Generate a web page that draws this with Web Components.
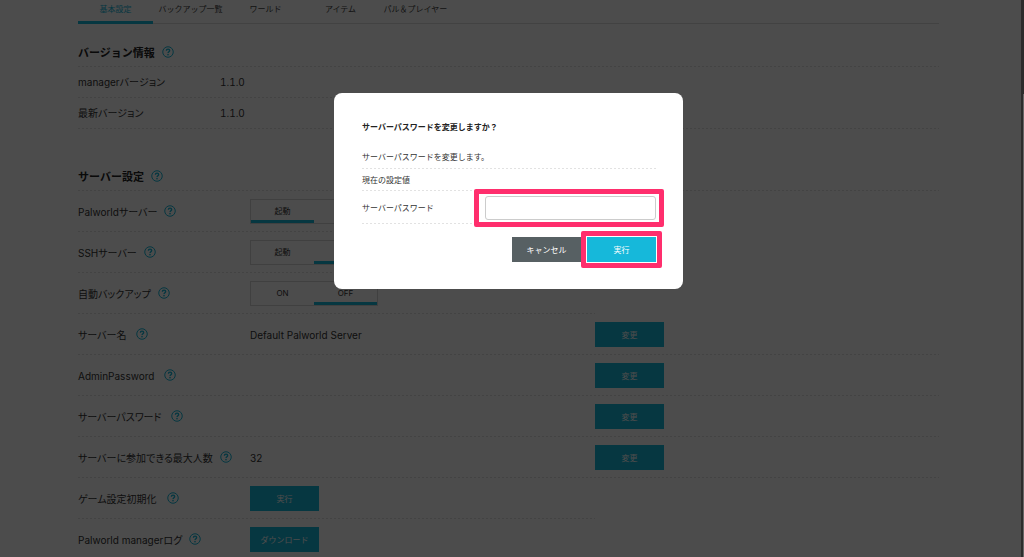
<!DOCTYPE html>
<html lang="ja">
<head>
<meta charset="utf-8">
<meta name="viewport" content="width=device-width, initial-scale=1">
<title>Palworld manager</title>
<style>
html, body { margin: 0; height: 100%; }
body {
  overflow: hidden;
  background: #fff;
  color: #333;
  font: 10px/16px Inter, "Noto Sans CJK JP", sans-serif;
  font-feature-settings: "palt";
  --accent: #16b8da;
  --dots: repeating-linear-gradient(90deg, #e2e2e2 0 2px, transparent 2px 4px);
}
</style>
</head>
<body>
<manager-page></manager-page>

<script>
function define(name, html, setup) {
  const template = document.createElement('template');
  template.innerHTML = html;
  customElements.define(name, class extends HTMLElement {
    constructor() {
      super();
      this.attachShadow({ mode: 'open' }).append(template.content.cloneNode(true));
    }
    connectedCallback() { if (setup) setup(this, this.shadowRoot); }
  });
}

define('help-button', `
<style>
:host { display: block; height: 14px; }
button { display: block; width: 12px; height: 12px; padding: 0; border: 0; background: none; color: var(--accent); }
svg { display: block; width: 12px; height: 12px; }
</style>
<button type="button" aria-label="ヘルプ">
<svg viewBox="0 0 24 24" fill="none" stroke="currentColor" stroke-width="2">
<circle cx="12" cy="12" r="10.5"/>
<path d="M8.800 9.400c0-2 1.400-3.200 3.300-3.200s3.200 1.100 3.200 2.800c0 2.400-3.200 2.500-3.200 5.200" stroke-width="2.800"/>
<circle cx="12" cy="17.300" r="1.600" fill="currentColor" stroke="none"/>
</svg></button>`);

define('action-button', `
<style>
:host { display: block; width: 69px; }
button { display: block; width: 100%; height: 25px; padding: 0; border: 0; background: var(--accent); color: #fff; font: inherit; font-size: 8px; font-feature-settings: normal; }
:host([muted]) button { background: #576063; }
</style>
<button type="button"><slot></slot></button>`);

define('nav-tabs', `
<style>
nav { display: flex; box-shadow: inset 0 -1px #ddd; }
:host { display: block; }
::slotted(a) { box-sizing: border-box; width: 75px; height: 24px; line-height: 18px; text-align: center; font-size: 8px; font-feature-settings: normal; white-space: nowrap; color: #444; text-decoration: none; }
::slotted(a[aria-current]) { color: var(--accent); border-bottom: 3px solid var(--accent); }
</style>
<nav><slot></slot></nav>`);

define('settings-section', `
<style>
:host { display: block; }
header { display: flex; align-items: center; gap: 7px; height: 28px; background: var(--dots) left bottom / 100% 1px no-repeat; }
h2 { margin: 0; font-size: 11px; font-weight: 700; line-height: 16px; color: #222; font-feature-settings: normal; }
</style>
<header><h2><slot name="title"></slot></h2><help-button></help-button></header>
<slot></slot>`);

define('setting-row', `
<style>
:host { display: grid; grid-template-columns: 172px 345px 1fr; align-items: center; box-sizing: border-box; height: 41px; padding-top: 1px; padding-bottom: 1px; background: var(--dots) left bottom / 100% 1px no-repeat; }
:host([short]) { background-size: 517px 1px; }
:host([compact]) { grid-template-columns: 142px 1fr; height: 31px; padding-bottom: 2px; font-kerning: none; }
.label { display: flex; align-items: center; gap: 7px; white-space: nowrap; }
:host([wide]) .label { gap: 10px; }
:host([compact]) help-button { display: none; }
:host([compact]) .value { font-feature-settings: "tnum"; }
</style>
<div class="label"><slot name="label"></slot><help-button></help-button></div>
<div class="value"><slot></slot></div>
<slot name="action"></slot>`);

define('toggle-switch', `
<style>
:host { display: block; }
.box { display: flex; box-sizing: border-box; width: 128px; height: 25px; border: 1px solid #d8d8d8; font-size: 8px; font-feature-settings: normal; }
label { flex: 1; box-sizing: border-box; line-height: 23px; text-align: center; }
label:has(:checked) { box-shadow: inset 0 -3px var(--accent); }
input { position: absolute; opacity: 0; width: 1px; height: 1px; margin: 0; }
</style>
<div class="box" role="radiogroup">
<label><input type="radio" name="state" value="on"><span class="on"></span></label>
<label><input type="radio" name="state" value="off"><span class="off"></span></label>
</div>`, (host, root) => {
  root.querySelector('.on').textContent = host.getAttribute('on');
  root.querySelector('.off').textContent = host.getAttribute('off');
  root.querySelector('[value="' + host.getAttribute('value') + '"]').checked = true;
});

define('focus-frame', `
<style>
:host { display: block; position: relative; }
:host::after { content: ""; position: absolute; inset: -6px; border: 5px solid #ff2e6d; border-radius: 2px; pointer-events: none; }
:host([field])::after { inset: -7px -8px -7px -11px; }
</style>
<slot></slot>`);

define('password-dialog', `
<style>
:host { display: block; width: 349px; }
section { box-sizing: border-box; padding: 25px 27px 27px 28px; border-radius: 8px; background: #fff; font-size: 8px; font-feature-settings: normal; }
h1 { margin: 0 0 7px; font-size: 8px; line-height: 18px; font-weight: 700; color: #222; }
p { margin: 0; height: 26px; line-height: 28px; }
.line { background: var(--dots) left bottom / 100% 1px no-repeat; }
.current { height: 22px; line-height: 22px; }
.field { display: flex; align-items: center; justify-content: space-between; height: 33px; }
input { display: block; box-sizing: border-box; width: 171px; height: 24px; padding: 0 6px; border: 1px solid #ccc; border-radius: 3px; background: #fff; font: inherit; outline: 0; }
footer { display: flex; justify-content: flex-end; gap: 6px; padding-top: 13px; }
</style>
<section role="dialog" aria-modal="true" aria-labelledby="title">
<h1 id="title">サーバーパスワードを変更しますか？</h1>
<p class="line">サーバーパスワードを変更します。</p>
<div class="line current">現在の設定値</div>
<div class="line field"><label for="password">サーバーパスワード</label><focus-frame field><input id="password" type="text"></focus-frame></div>
<footer><action-button muted>キャンセル</action-button><focus-frame><action-button>実行</action-button></focus-frame></footer>
</section>`);

define('modal-overlay', `
<style>
:host { position: fixed; inset: 0; display: flex; justify-content: center; align-items: flex-start; padding: 93px 7px 0 0; background: rgba(0, 0, 0, .7); }
.rail { position: absolute; top: 0; right: 0; bottom: 0; width: 3px; background: #2c2c2c; }
.rail::after { content: ""; position: absolute; top: 94px; right: 0; bottom: 0; width: 1px; background: #666; }
</style>
<slot></slot><div class="rail"></div>`);

define('manager-page', `
<style>
:host { display: block; }
main { padding: 0 85px 0 78px; }
.version { margin-top: 15px; }
.server { margin-top: 34px; }
</style>
<main>
<nav-tabs>
<a href="#basic" aria-current="page">基本設定</a><a href="#backup">バックアップ一覧</a><a href="#world">ワールド</a><a href="#item">アイテム</a><a href="#pal">パル＆プレイヤー</a>
</nav-tabs>
<settings-section class="version"><span slot="title">バージョン情報</span>
<setting-row compact short><span slot="label">managerバージョン</span>1.1.0</setting-row>
<setting-row compact><span slot="label">最新バージョン</span>1.1.0</setting-row>
</settings-section>
<settings-section class="server"><span slot="title">サーバー設定</span>
<setting-row short><span slot="label">Palworldサーバー</span><toggle-switch on="起動" off="停止" value="on"></toggle-switch></setting-row>
<setting-row short><span slot="label">SSHサーバー</span><toggle-switch on="起動" off="停止" value="off"></toggle-switch></setting-row>
<setting-row short><span slot="label">自動バックアップ</span><toggle-switch on="ON" off="OFF" value="off"></toggle-switch></setting-row>
<setting-row wide><span slot="label">サーバー名</span>Default Palworld Server<action-button slot="action">変更</action-button></setting-row>
<setting-row wide><span slot="label">AdminPassword</span><action-button slot="action">変更</action-button></setting-row>
<setting-row wide><span slot="label">サーバーパスワード</span><action-button slot="action">変更</action-button></setting-row>
<setting-row><span slot="label">サーバーに参加できる最大人数</span>32<action-button slot="action">変更</action-button></setting-row>
<setting-row wide short><span slot="label">ゲーム設定初期化</span><action-button>実行</action-button></setting-row>
<setting-row short><span slot="label">Palworld managerログ</span><action-button>ダウンロード</action-button></setting-row>
</settings-section>
</main>
<modal-overlay><password-dialog></password-dialog></modal-overlay>`);
</script>
</body>
</html>
